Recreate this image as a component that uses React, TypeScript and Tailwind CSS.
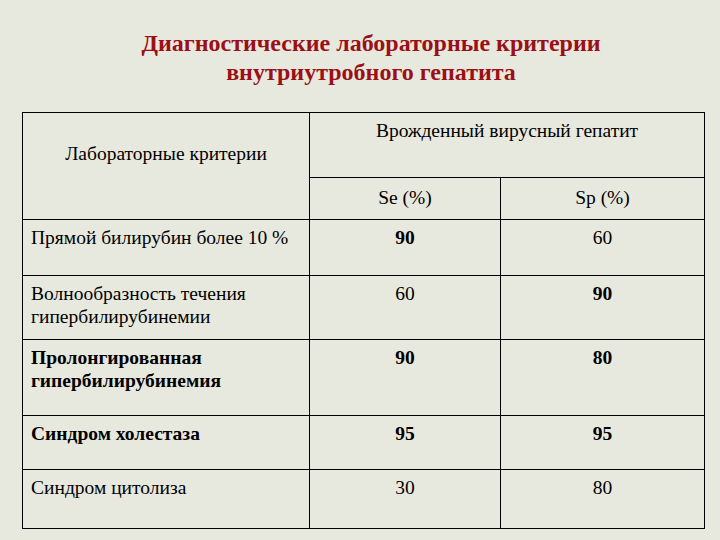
import React from "react";

type Row = { label: string[]; boldLabel: boolean; se: string; seB: boolean; sp: string; spB: boolean; h: string };

const rows: Row[] = [
  { label: ["Прямой билирубин более 10 %"], boldLabel: false, se: "90", seB: true, sp: "60", spB: false, h: "h-[56px]" },
  { label: ["Волнообразность течения", "гипербилирубинемии"], boldLabel: false, se: "60", seB: false, sp: "90", spB: true, h: "h-[64px]" },
  { label: ["Пролонгированная", "гипербилирубинемия"], boldLabel: true, se: "90", seB: true, sp: "80", spB: true, h: "h-[76px]" },
  { label: ["Синдром холестаза"], boldLabel: true, se: "95", seB: true, sp: "95", spB: true, h: "h-[54px]" },
  { label: ["Синдром цитолиза"], boldLabel: false, se: "30", seB: false, sp: "80", spB: false, h: "h-[59px]" },
];

const cell = "border border-black align-top font-['Times_New_Roman','Liberation_Serif',serif]";

export default function App() {
  return (
    <div className="w-[720px] h-[540px] bg-[#e8e9de] overflow-hidden text-black font-['Times_New_Roman','Liberation_Serif',serif]">
      <div className="pt-[29px] pl-[22px] text-center text-[#9b1016] font-bold text-[24px] leading-[29px] font-['Times_New_Roman','Liberation_Serif',serif]">
        <div>Диагностические лабораторные критерии</div>
        <div>внутриутробного гепатита</div>
      </div>
      <table className="mt-[25px] ml-[22px] border-collapse table-fixed w-[682px] text-[19.5px] leading-[23px]">
        <colgroup>
          <col className="w-[287px]" />
          <col className="w-[191px]" />
          <col className="w-[204px]" />
        </colgroup>
        <tbody>
          <tr className="h-[65px]">
            <td rowSpan={2} className={`${cell} text-center pt-[29px]`}>
              Лабораторные критерии
            </td>
            <td colSpan={2} className={`${cell} text-center pt-[6px]`}>
              Врожденный вирусный гепатит
            </td>
          </tr>
          <tr className="h-[42px]">
            <td className={`${cell} text-center pt-[8px]`}>Se (%)</td>
            <td className={`${cell} text-center pt-[8px]`}>Sp (%)</td>
          </tr>
          {rows.map((r, i) => (
            <tr key={i} className={r.h}>
              <td className={`${cell} text-left pl-[8px] pt-[6px] ${r.boldLabel ? "font-bold" : ""}`}>
                {r.label.map((l, j) => (
                  <div key={j}>{l}</div>
                ))}
              </td>
              <td className={`${cell} text-center pt-[6px] ${r.seB ? "font-bold" : ""}`}>{r.se}</td>
              <td className={`${cell} text-center pt-[6px] ${r.spB ? "font-bold" : ""}`}>{r.sp}</td>
            </tr>
          ))}
        </tbody>
      </table>
    </div>
  );
}
